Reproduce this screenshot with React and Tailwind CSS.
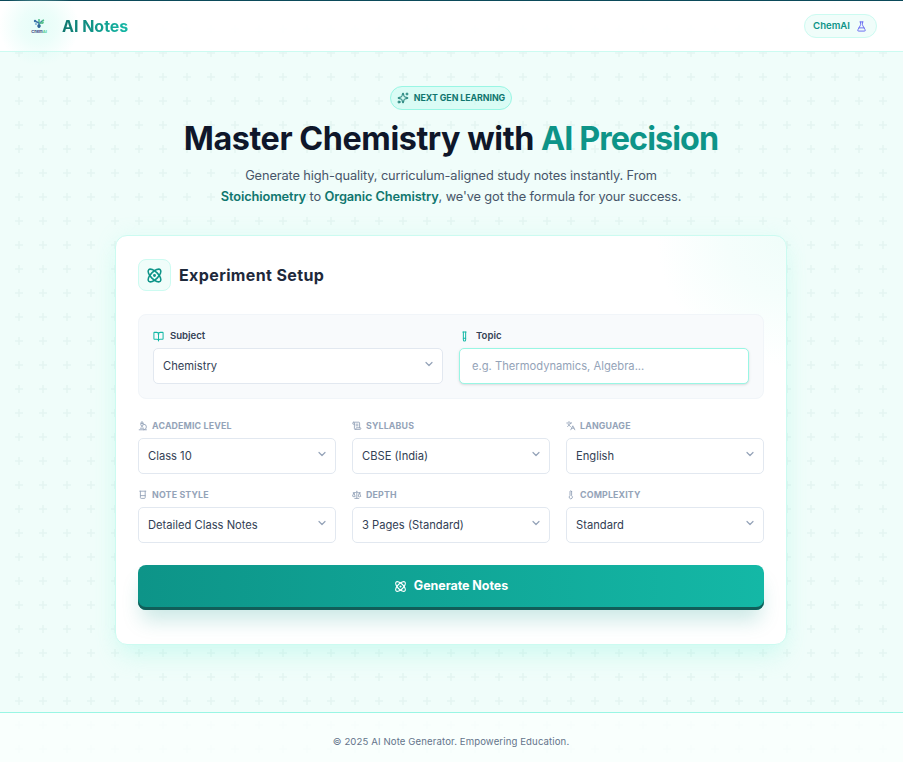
import {
  Atom,
  Beaker,
  BookOpen,
  ChevronDown,
  FlaskConical,
  Languages,
  Microscope,
  Scale,
  ScrollText,
  Sparkles,
  TestTube,
  Thermometer,
} from "lucide-react";

const options = [
  { icon: Microscope, label: "Academic Level", value: "Class 10" },
  { icon: ScrollText, label: "Syllabus", value: "CBSE (India)" },
  { icon: Languages, label: "Language", value: "English" },
  { icon: Beaker, label: "Note Style", value: "Detailed Class Notes" },
  { icon: Scale, label: "Depth", value: "3 Pages (Standard)" },
  { icon: Thermometer, label: "Complexity", value: "Standard" },
];

function PlusPattern() {
  return (
    <svg className="absolute inset-0 w-full h-full pointer-events-none" aria-hidden="true">
      <defs>
        <pattern id="plus" x="7" y="17" width="24" height="24" patternUnits="userSpaceOnUse">
          <path d="M8 12h8M12 8v8" stroke="#e5f5f2" strokeWidth="1.6" fill="none" />
        </pattern>
      </defs>
      <rect width="100%" height="100%" fill="url(#plus)" />
    </svg>
  );
}

function Logo() {
  return (
    <div className="relative w-8 h-8 flex flex-col items-center justify-center">
      {/* soft glow behind the mark */}
      <div className="absolute -inset-6 rounded-full bg-[radial-gradient(closest-side,rgba(204,251,241,0.5)_0,rgba(204,251,241,0.35)_45%,transparent_100%)]"></div>
      <svg className="relative" width="14" height="12" viewBox="0 0 14 12" fill="none">
        <path d="M7 10V5L3 3M7 6l3-3" stroke="#3b73a8" strokeWidth="1.4" />
        <path d="M7 5h4M7 4V1M10 3l2-1" stroke="#4fbd8b" strokeWidth="1.5" />
        <circle cx="3" cy="3" r="1.2" fill="#3b73a8" />
        <circle cx="4" cy="6" r="0.9" fill="#6fa3cf" />
        <circle cx="10.5" cy="4.5" r="1.3" fill="#5bc48f" />
        <circle cx="7" cy="8" r="1.8" fill="#2d6596" />
      </svg>
      <span className="relative text-[4px] leading-[4px] font-bold text-[#37427d]">
        Chem<span className="text-[#4ccb93]">AI</span>
      </span>
    </div>
  );
}

function Select({ value }) {
  return (
    <button className="w-full h-9 px-[9px] flex items-center justify-between bg-white border border-[#e2e8f0] rounded-[5px] text-[11.2px] text-[#334155]">
      <span>{value}</span>
      <ChevronDown className="w-3 h-3 text-[#94a3b8] -mt-1 -mr-[2px]" strokeWidth={2.4} />
    </button>
  );
}

export default function App() {
  return (
    <div className="relative h-[762px] flex flex-col overflow-hidden bg-[#f0fdfa] font-['Inter',sans-serif] text-[#334155]">
      <PlusPattern />

      <header className="relative h-[52px] shrink-0 flex items-center justify-between pl-[23px] pr-[26px] bg-white/95 border-t border-t-[#0b4a5a] border-b border-b-[#ccfbf1]">
        <div className="flex items-center gap-[7px]">
          <Logo />
          <span className="relative text-[16px] font-bold tracking-[-0.02px] bg-linear-to-r/srgb from-[#0f766e] to-[#14b8a6] bg-clip-text text-transparent">
            AI Notes
          </span>
        </div>
        <div className="h-6 pl-[8px] pr-[9px] flex items-center gap-1.5 rounded-full bg-[#f0fdfa] border border-[#ccfbf1] text-[9.6px] font-semibold text-[#0d9488]">
          ChemAI
          <FlaskConical className="w-[11px] h-[11px] text-[#6366f1]" />
        </div>
      </header>

      <main className="relative flex-1 flex flex-col items-center pt-[34px] pr-px">
        <div className="h-6 px-[6px] flex items-center gap-[5px] rounded-full bg-[#ccfbf1]/60 border border-[#99f6e4] text-[8.8px] font-bold uppercase tracking-[-0.04px] text-[#0f766e]">
          <Sparkles className="w-3 h-3" />
          Next Gen Learning
        </div>

        <h1 className="mt-[9px] text-[32.3px] leading-10 font-bold tracking-[-0.42px] text-[#0f172a] whitespace-nowrap">
          Master Chemistry with <span className="tracking-[-0.9px] text-[#0d9488]">AI Precision</span>
        </h1>
        <p className="mt-[6px] text-[12.8px] leading-[21px] tracking-[-0.11px] text-center text-[#475569] whitespace-nowrap">
          Generate high-quality, curriculum-aligned study notes instantly. From
          <br />
          <strong className="font-semibold text-[#0f766e]">Stoichiometry</strong> to{" "}
          <strong className="font-semibold text-[#0f766e]">Organic Chemistry</strong>, we've got the formula for your
          success.
        </p>

        <section className="relative mt-[28px] w-[672px] h-[410px] px-[22px] pt-[23px] bg-white border border-[#ccfbf1] rounded-xl shadow-[0_16px_24px_-6px_rgba(153,246,228,0.32),0_0_20px_rgba(153,246,228,0.15)] bg-[radial-gradient(circle_at_100%_0%,#f0fdfa_0,#f5fefc_60px,#ffffff_130px)]">
          <div className="flex items-center gap-[8px]">
            <div className="w-[33px] h-8 flex items-center justify-center bg-[#f0fdfa] border border-[#ccfbf1] rounded-lg text-[#0d9488]">
              <Atom className="w-[17px] h-[17px] -ml-px" strokeWidth={2.2} />
            </div>
            <h2 className="text-base font-bold tracking-[0.38px] text-[#1e293b]">Experiment Setup</h2>
          </div>

          <div className="mt-[23px] h-[85px] px-[14px] pt-[13px] grid grid-cols-2 gap-4 bg-[#f8fafc] border border-[#f1f5f9] rounded-lg">
            <div>
              <div className="h-[15px] mb-[5px] pt-px flex items-center gap-[6px] text-[9.6px] font-semibold text-[#334155]">
                <BookOpen className="w-[11px] h-[11px] text-[#14b8a6]" strokeWidth={2.2} />
                Subject
              </div>
              <Select value="Chemistry" />
            </div>
            <div>
              <div className="h-[15px] mb-[5px] pt-px flex items-center gap-[6px] text-[9.6px] font-semibold text-[#334155]">
                <TestTube className="w-[11px] h-[11px] text-[#14b8a6]" strokeWidth={2.2} />
                Topic
              </div>
              <input
                className="block w-full h-9 px-[12px] bg-white border border-[#99f6e4] rounded-[5px] text-[11.2px] placeholder:text-[#94a3b8] shadow-sm outline-none"
                placeholder="e.g. Thermodynamics, Algebra..."
              />
            </div>
          </div>

          <div className="mt-[21px] grid grid-cols-3 gap-x-4 gap-y-[15px]">
            {options.map(({ icon: Icon, label, value }) => (
              <div key={label}>
                <div className="h-3 mb-[6px] flex items-center gap-[4.5px] text-[8.8px] font-bold uppercase tracking-[0.16px] text-[#94a3b8]">
                  <Icon className="w-[9.6px] h-[9.6px]" strokeWidth={2.2} />
                  {label}
                </div>
                <Select value={value} />
              </div>
            ))}
          </div>

          <button className="mt-[22px] w-full h-[45px] pb-[3px] flex items-center justify-center gap-[7px] rounded-lg bg-linear-to-r/srgb from-[#0d9488] to-[#14b8a6] text-white text-[12.5px] font-bold tracking-[-0.06px] shadow-[inset_0_-3px_0_#115e59,0_14px_20px_-4px_rgba(13,148,136,0.22)]">
            <Atom className="w-[13px] h-[13px]" />
            Generate Notes
          </button>
        </section>
      </main>

      <footer className="relative h-[50px] shrink-0 flex items-center justify-center pt-[9px] pr-px bg-[#fbfffe]/80 border-t border-[#99f6e4] text-[9.6px] tracking-[0.11px] text-[#64748b]">
        © 2025 AI Note Generator. Empowering Education.
      </footer>
    </div>
  );
}
